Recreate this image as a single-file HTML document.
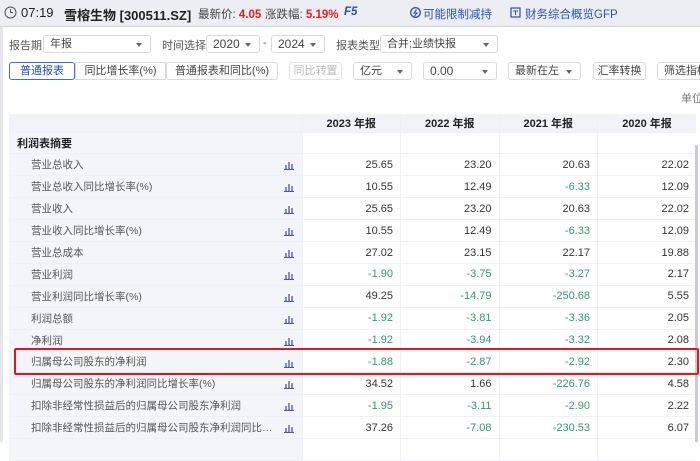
<!DOCTYPE html>
<html><head><meta charset="utf-8"><style>
*{margin:0;padding:0;box-sizing:border-box}
body{width:700px;height:442px;overflow:hidden;background:#fff;font-family:"Liberation Sans","Noto Sans CJK SC",sans-serif;font-size:11px;color:#444;position:relative}
.top{position:absolute;left:0;top:0;width:700px;height:27px;background:#eceef3;border-bottom:1px solid #cfd3db}
.a{position:absolute;white-space:nowrap}
.box{position:absolute;border:1px solid #d6d9e0;border-radius:3px;background:#fff;height:18px;line-height:16px;padding-left:6px;color:#444;white-space:nowrap;overflow:hidden}
.box .ar{position:absolute;right:8px;top:7px;width:0;height:0;border-left:3px solid transparent;border-right:3px solid transparent;border-top:4px solid #666}
.lbl{position:absolute;color:#555;white-space:nowrap}
table{position:absolute;left:9px;top:114px;border-collapse:collapse;table-layout:fixed;width:687px}
td{height:21.9px;border-bottom:1px solid #eef0f5;white-space:nowrap;overflow:hidden}
td.l{width:293px;background:#f3f5fa;padding-left:22px;color:#555;position:relative}
td.l span{display:block;width:245px;overflow:hidden;text-overflow:ellipsis;font-size:10.5px}
td.v{width:98.5px;text-align:right;padding-right:7px;color:#333;border-left:1px solid #eef0f6}
tr.h td{height:18px;background:#f1f3f8;font-weight:bold;text-align:center;color:#222;padding:0}
.g{color:#2a9a6a!important}
.ic{position:absolute;left:275px;top:6px;width:10px;height:10px}
</style></head><body>
<div class="top">
<svg class="a" style="left:4px;top:6px" width="13" height="13" viewBox="0 0 13 13"><circle cx="6.5" cy="6.5" r="5.5" fill="none" stroke="#555" stroke-width="1"/><path d="M6.5 3v3.5h2.5" fill="none" stroke="#555"/></svg>
<div class="a" style="left:21px;top:5px;font-size:13px;color:#222">07:19</div>
<div class="a" style="left:64px;top:5px;font-size:13px;font-weight:bold;color:#222">雪榕生物 [300511.SZ]</div>
<div class="a" style="left:198px;top:6px;font-size:11.5px;color:#444">最新价: <b style="color:#e0201a">4.05</b></div>
<div class="a" style="left:265px;top:6px;font-size:11.5px;color:#444">涨跌幅: <b style="color:#e0201a">5.19%</b></div>
<div class="a" style="left:344px;top:6px;font-size:11.5px;font-weight:bold;font-style:italic;color:#2450c0">F5</div>
<svg class="a" style="left:410px;top:7px" width="11" height="11" viewBox="0 0 11 11"><circle cx="5.5" cy="5.5" r="4.8" fill="none" stroke="#2450c0" stroke-width="1.3"/><path d="M6.5 2.5L4 6h3L4.5 9" fill="none" stroke="#2450c0" stroke-width="1.1"/></svg>
<div class="a" style="left:423px;top:6px;color:#2450c0;font-size:11.5px">可能限制减持</div>
<svg class="a" style="left:510px;top:7px" width="11" height="11" viewBox="0 0 11 11"><rect x="1" y="1" width="9" height="9" fill="none" stroke="#2450c0" stroke-width="1.2"/><path d="M3 4h5M5.5 4v4" stroke="#2450c0"/></svg>
<div class="a" style="left:525px;top:6px;color:#2450c0;font-size:11.5px">财务综合概览GFP</div>
</div>

<div class="lbl" style="left:9px;top:37px">报告期</div>
<div class="box" style="left:43px;top:35px;width:108px">年报<span class="ar"></span></div>
<div class="lbl" style="left:162px;top:37px">时间选择</div>
<div class="box" style="left:206px;top:35px;width:54px;font-size:12px">2020<span class="ar"></span></div>
<div class="lbl" style="left:263px;top:37px">-</div>
<div class="box" style="left:271px;top:35px;width:54px;font-size:12px">2024<span class="ar"></span></div>
<div class="lbl" style="left:336px;top:37px">报表类型</div>
<div class="box" style="left:380px;top:35px;width:118px">合并;业绩快报<span class="ar"></span></div>

<div class="box" style="left:9px;top:62px;width:66px;border-color:#3d6fd8;color:#2450c0;padding:0;text-align:center">普通报表</div>
<div class="box" style="left:75px;top:62px;width:91px;padding:0;text-align:center;border-radius:0">同比增长率(%)</div>
<div class="box" style="left:166px;top:62px;width:112px;padding:0;text-align:center">普通报表和同比(%)</div>
<div class="box" style="left:289px;top:62px;width:53px;padding:0;text-align:center;color:#bbb;border-color:#e2e4e8">同比转置</div>
<div class="box" style="left:353px;top:62px;width:59px">亿元<span class="ar"></span></div>
<div class="box" style="left:423px;top:62px;width:74px;font-size:12px">0.00<span class="ar"></span></div>
<div class="box" style="left:508px;top:62px;width:73px">最新在左<span class="ar"></span></div>
<div class="box" style="left:593px;top:62px;width:53px;padding:0;text-align:center">汇率转换</div>
<div class="box" style="left:657px;top:62px;width:60px">筛选指标</div>
<div class="lbl" style="left:681px;top:90px;color:#777">单位</div>

<div class="a" style="left:0;top:27px;width:3px;height:415px;background:#e4e6ea"></div>

<table>
<tr class="h"><td class="l" style="background:#f1f3f8"></td><td class="v">2023 年报</td><td class="v">2022 年报</td><td class="v">2021 年报</td><td class="v">2020 年报</td></tr>
<tr><td class="l" style="padding-left:8px;color:#222;font-weight:bold">利润表摘要</td><td class="v"></td><td class="v"></td><td class="v"></td><td class="v"></td></tr>
</table>

<table style="top:154px" id="t">
</table>
<div class="a" style="left:695px;top:145px;width:3px;height:297px;background:#c8cbd2"></div>
<script>
var R=[["营业总收入","25.65","23.20","20.63","22.02"],["营业总收入同比增长率(%)","10.55","12.49","-6.33","12.09"],["营业收入","25.65","23.20","20.63","22.02"],["营业收入同比增长率(%)","10.55","12.49","-6.33","12.09"],["营业总成本","27.02","23.15","22.17","19.88"],["营业利润","-1.90","-3.75","-3.27","2.17"],["营业利润同比增长率(%)","49.25","-14.79","-250.68","5.55"],["利润总额","-1.92","-3.81","-3.36","2.05"],["净利润","-1.92","-3.94","-3.32","2.08"],["归属母公司股东的净利润","-1.88","-2.87","-2.92","2.30"],["归属母公司股东的净利润同比增长率(%)","34.52","1.66","-226.76","4.58"],["扣除非经常性损益后的归属母公司股东净利润","-1.95","-3.11","-2.90","2.22"],["扣除非经常性损益后的归属母公司股东净利润同比增长率(%)","37.26","-7.08","-230.53","6.07"],["","","","",""]];
var ic='<svg class="ic" viewBox="0 0 10 10"><path d="M0 9.5h10M2 5v4M5 2v7M8 4v5" stroke="#4a5a9a" stroke-width="1.3"/></svg>';
var h="";R.forEach(function(r){h+='<tr><td class="l"><span>'+r[0]+'</span>'+(r[0]?ic:'')+'</td>';for(var i=1;i<5;i++){h+='<td class="v'+(r[i][0]=="-"?' g':'')+'">'+r[i]+'</td>'}h+='</tr>'});
document.getElementById("t").innerHTML=h;
</script>
<div class="a" style="left:14px;top:348px;width:685px;height:27px;border:2px solid #e8141c;border-radius:2px"></div>
</body></html>
